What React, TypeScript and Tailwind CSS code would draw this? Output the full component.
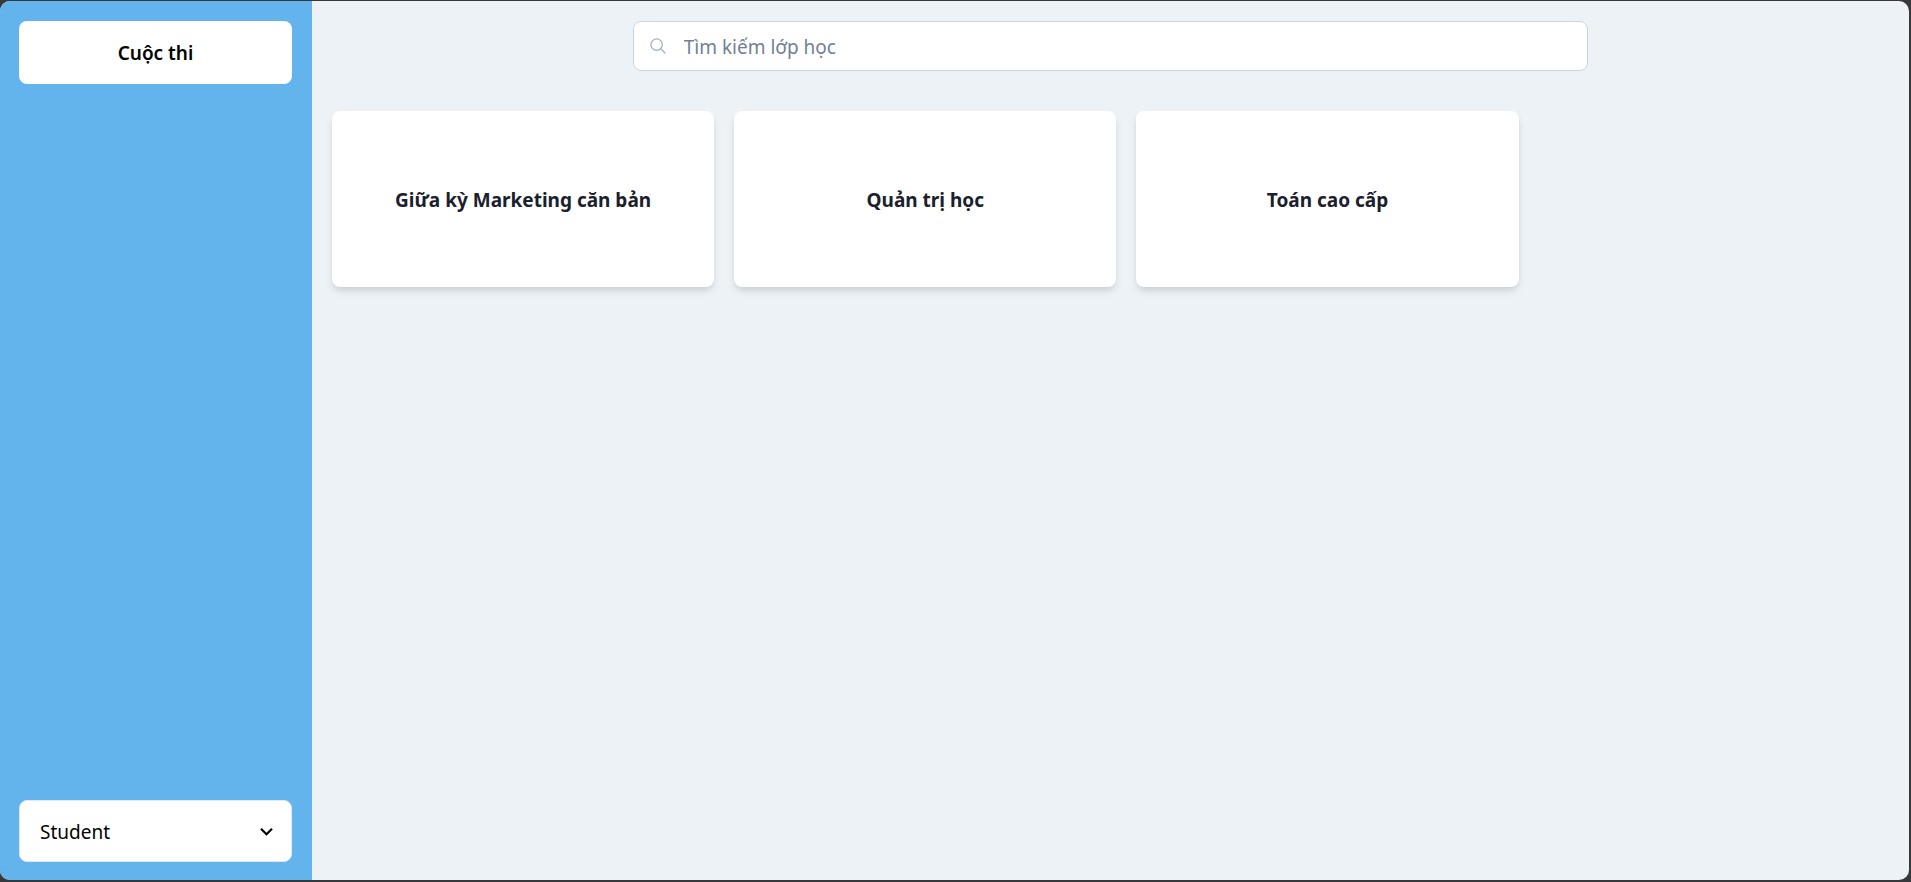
const classes = ["Giữa kỳ Marketing căn bản", "Quản trị học", "Toán cao cấp"];

function SearchIcon() {
  return (
    <svg
      viewBox="0 0 16 16"
      aria-hidden="true"
      className="size-4 shrink-0 text-[#a0aec0]"
      fill="none"
      stroke="currentColor"
      strokeWidth="1.25"
      strokeLinecap="round"
    >
      <circle cx="6.6" cy="6.6" r="5.7" />
      <path d="M10.8 10.8L15 15" />
    </svg>
  );
}

function Sidebar() {
  return (
    <aside className="flex w-78 shrink-0 flex-col justify-between bg-[#63b3ed] pt-5 pr-5 pb-[18px] pl-[19px]">
      <button
        type="button"
        className="h-[63px] w-full rounded-lg bg-white pt-0.5 text-[19px] font-semibold text-black"
      >
        Cuộc thi
      </button>
      <div className="grid items-center">
        <select
          aria-label="Role"
          defaultValue="student"
          className="col-start-1 row-start-1 h-[62px] w-full appearance-none rounded-lg border border-[#e2e8f0] bg-white px-5 pt-0.5 text-[19px] text-black"
        >
          <option value="student">Student</option>
        </select>
        <svg
          viewBox="0 0 24 24"
          aria-hidden="true"
          className="pointer-events-none col-start-1 row-start-1 mr-[13px] size-[25px] justify-self-end"
        >
          <path d="M16.59 8.59L12 13.17 7.41 8.59 6 10l6 6 6-6z" fill="black" />
        </svg>
      </div>
    </aside>
  );
}

function SearchBox() {
  return (
    <label className="flex h-[50px] w-[50vw] items-center rounded-lg border border-[#cbd5e0] bg-white pl-4">
      <SearchIcon />
      <input
        type="text"
        aria-label="Tìm kiếm lớp học"
        placeholder="Tìm kiếm lớp học"
        className="ml-[18px] h-full min-w-0 flex-1 rounded-lg bg-transparent pt-0.5 text-[19px] text-[#1a202c] outline-none placeholder:text-[#718096]"
      />
    </label>
  );
}

export default function App() {
  return (
    <div className="flex min-h-screen bg-[#37383b] pt-px pr-0.5 pb-0.5 font-['Noto_Sans',sans-serif]">
      <div className="flex flex-1 overflow-hidden rounded-[10px] bg-[#edf2f7]">
        <Sidebar />
        <main className="flex min-w-0 flex-1 flex-col p-5">
          <div className="flex justify-center">
            <SearchBox />
          </div>
          <div className="mt-10 flex flex-wrap gap-5">
            {classes.map((name) => (
              <article
                key={name}
                className="flex h-44 w-[20vw] items-center justify-center rounded-lg bg-white pt-0.5 shadow-[0_5px_8px_-1px_rgba(0,0,0,0.1),0_3px_5px_-1px_rgba(0,0,0,0.06)]"
              >
                <h2 className="text-[19px] font-bold text-[#1a202c]">{name}</h2>
              </article>
            ))}
          </div>
        </main>
      </div>
    </div>
  );
}
